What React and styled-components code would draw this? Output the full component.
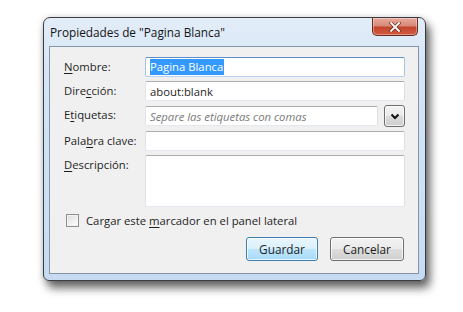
import React from "react";
import styled, { createGlobalStyle } from "styled-components";

const Global = createGlobalStyle`
  html, body { margin: 0; padding: 0; background: #ffffff; }
  body { font-family: "Open Sans", "Noto Sans", sans-serif; font-size: 11.3px; color: #1e1e1e; }
`;

const Page = styled.div`
  width: 463px;
  height: 312px;
  padding: 17px 0 0 43px;
  box-sizing: border-box;
`;

const Window = styled.div`
  width: 383px;
  height: 264px;
  box-sizing: border-box;
  border: 1px solid #3a3d42;
  border-radius: 7px 7px 6px 6px;
  background: linear-gradient(180deg, #e3edf8 0%, #d5e5f6 20%, #c6dbf2 100%);
  box-shadow: 4px 7px 10px rgba(0, 0, 0, 0.6), 0 0 6px rgba(0, 0, 0, 0.15);
  padding: 0 6px 6px 5px;
  display: flex;
  flex-direction: column;
`;

const TitleBar = styled.div`
  height: 28px;
  display: flex;
  align-items: flex-start;
  justify-content: space-between;
`;

const Title = styled.div`
  padding: 6px 0 0 1px;
  font-size: 11.8px;
  color: #141414;
`;

const CloseButton = styled.div`
  width: 46px;
  height: 18px;
  box-sizing: border-box;
  margin-right: 1px;
  border: 1px solid #6b2a22;
  border-top: none;
  border-radius: 0 0 5px 5px;
  background: linear-gradient(180deg, #e9a99c 0%, #d88a78 45%, #c4452f 55%, #d25c3f 100%);
  box-shadow: inset 0 0 0 1px rgba(255, 255, 255, 0.35);
  display: flex;
  align-items: center;
  justify-content: center;
`;

const Client = styled.div`
  flex: 1;
  box-sizing: border-box;
  border: 1px solid #8594a6;
  background: #f0f0f0;
  padding: 10px 13px 12px 14px;
  display: flex;
  flex-direction: column;
`;

const Form = styled.div`
  display: grid;
  grid-template-columns: 81px 1fr;
  row-gap: 4px;
`;

const Label = styled.label`
  line-height: 20px;
  color: #1e1e1e;
  align-self: start;
  u { text-decoration: underline; text-underline-offset: 2px; }
`;

const Input = styled.div`
  height: ${p => (p.$tall ? 52 : 20)}px;
  box-sizing: border-box;
  background: #ffffff;
  border: 1px solid;
  border-color: ${p => (p.$focus ? "#5c8fc7 #a9c4e4 #b7d1ee #a9c4e4" : "#abadb3 #dbdfe6 #e3e9ef #e2e3ea")};
  border-radius: 2px;
  padding: 0 4px;
  display: flex;
  align-items: ${p => (p.$tall ? "flex-start" : "center")};
  color: #1e1e1e;
`;

const Selected = styled.span`
  background: #3399ff;
  color: #ffffff;
  line-height: 16px;
  padding: 0 1px 0 0;
`;

const Placeholder = styled.span`
  color: #7a7a7a;
  font-style: italic;
`;

const TagRow = styled.div`
  display: flex;
  align-items: center;
  gap: 6px;
`;

const TagInput = styled(Input)`
  flex: 1;
`;

const DropButton = styled.div`
  width: 21px;
  height: 22px;
  box-sizing: border-box;
  border: 1px solid #6f6f6f;
  border-radius: 3px;
  background: linear-gradient(180deg, #f3f3f3 0%, #ebebeb 48%, #dadada 52%, #cfcfcf 100%);
  box-shadow: inset 0 0 0 1px rgba(255, 255, 255, 0.7);
  display: flex;
  align-items: center;
  justify-content: center;
`;

const CheckRow = styled.div`
  display: flex;
  align-items: center;
  gap: 7px;
  margin: 6px 0 0 2px;
  u { text-decoration: underline; text-underline-offset: 2px; }
`;

const CheckBox = styled.span`
  width: 13px;
  height: 13px;
  box-sizing: border-box;
  border: 1px solid #8e8f8f;
  background: linear-gradient(135deg, #dcdcdc 0%, #f2f2f2 60%, #ffffff 100%);
  box-shadow: inset 0 0 0 1px #f4f4f4;
`;

const ButtonRow = styled.div`
  display: flex;
  justify-content: flex-end;
  gap: 12px;
  margin-top: auto;
  padding-right: 1px;
`;

const Button = styled.div`
  width: ${p => p.$w}px;
  height: 24px;
  box-sizing: border-box;
  border: 1px solid ${p => (p.$default ? "#3c7fb1" : "#707070")};
  border-radius: 3px;
  background: ${p =>
    p.$default
      ? "linear-gradient(180deg, #eaf6fd 0%, #d9f0fc 48%, #bee6fd 52%, #a7d9f5 100%)"
      : "linear-gradient(180deg, #f2f2f2 0%, #ebebeb 48%, #dddddd 52%, #cfcfcf 100%)"};
  box-shadow: inset 0 0 0 1px rgba(255, 255, 255, 0.75);
  display: flex;
  align-items: center;
  justify-content: center;
  color: #1e1e1e;
  font-size: 11.8px;
`;

export default function App() {
  return (
    <Page>
      <Global />
      <Window>
        <TitleBar>
          <Title>Propiedades de "Pagina Blanca"</Title>
          <CloseButton>
            <svg width="12" height="10" viewBox="0 0 12 10">
              <path d="M2 1 L10 9 M10 1 L2 9" stroke="#6b2a22" strokeWidth="3.2" strokeLinecap="square" />
              <path d="M2 1 L10 9 M10 1 L2 9" stroke="#ffffff" strokeWidth="1.8" strokeLinecap="square" />
            </svg>
          </CloseButton>
        </TitleBar>
        <Client>
          <Form>
            <Label><u>N</u>ombre:</Label>
            <Input $focus><Selected>Pagina Blanca</Selected></Input>
            <Label>Dire<u>c</u>ción:</Label>
            <Input>about:blank</Input>
            <Label>E<u>t</u>iquetas:</Label>
            <TagRow>
              <TagInput><Placeholder>Separe las etiquetas con comas</Placeholder></TagInput>
              <DropButton>
                <svg width="10" height="7" viewBox="0 0 10 7">
                  <path d="M1.5 1.5 L5 5 L8.5 1.5" fill="none" stroke="#111" strokeWidth="2" />
                </svg>
              </DropButton>
            </TagRow>
            <Label>Pala<u>b</u>ra clave:</Label>
            <Input />
            <Label><u>D</u>escripción:</Label>
            <Input $tall />
          </Form>
          <CheckRow>
            <CheckBox />
            <span>Cargar este <u>m</u>arcador en el panel lateral</span>
          </CheckRow>
          <ButtonRow>
            <Button $default $w={72}>Guardar</Button>
            <Button $w={74}>Cancelar</Button>
          </ButtonRow>
        </Client>
      </Window>
    </Page>
  );
}
